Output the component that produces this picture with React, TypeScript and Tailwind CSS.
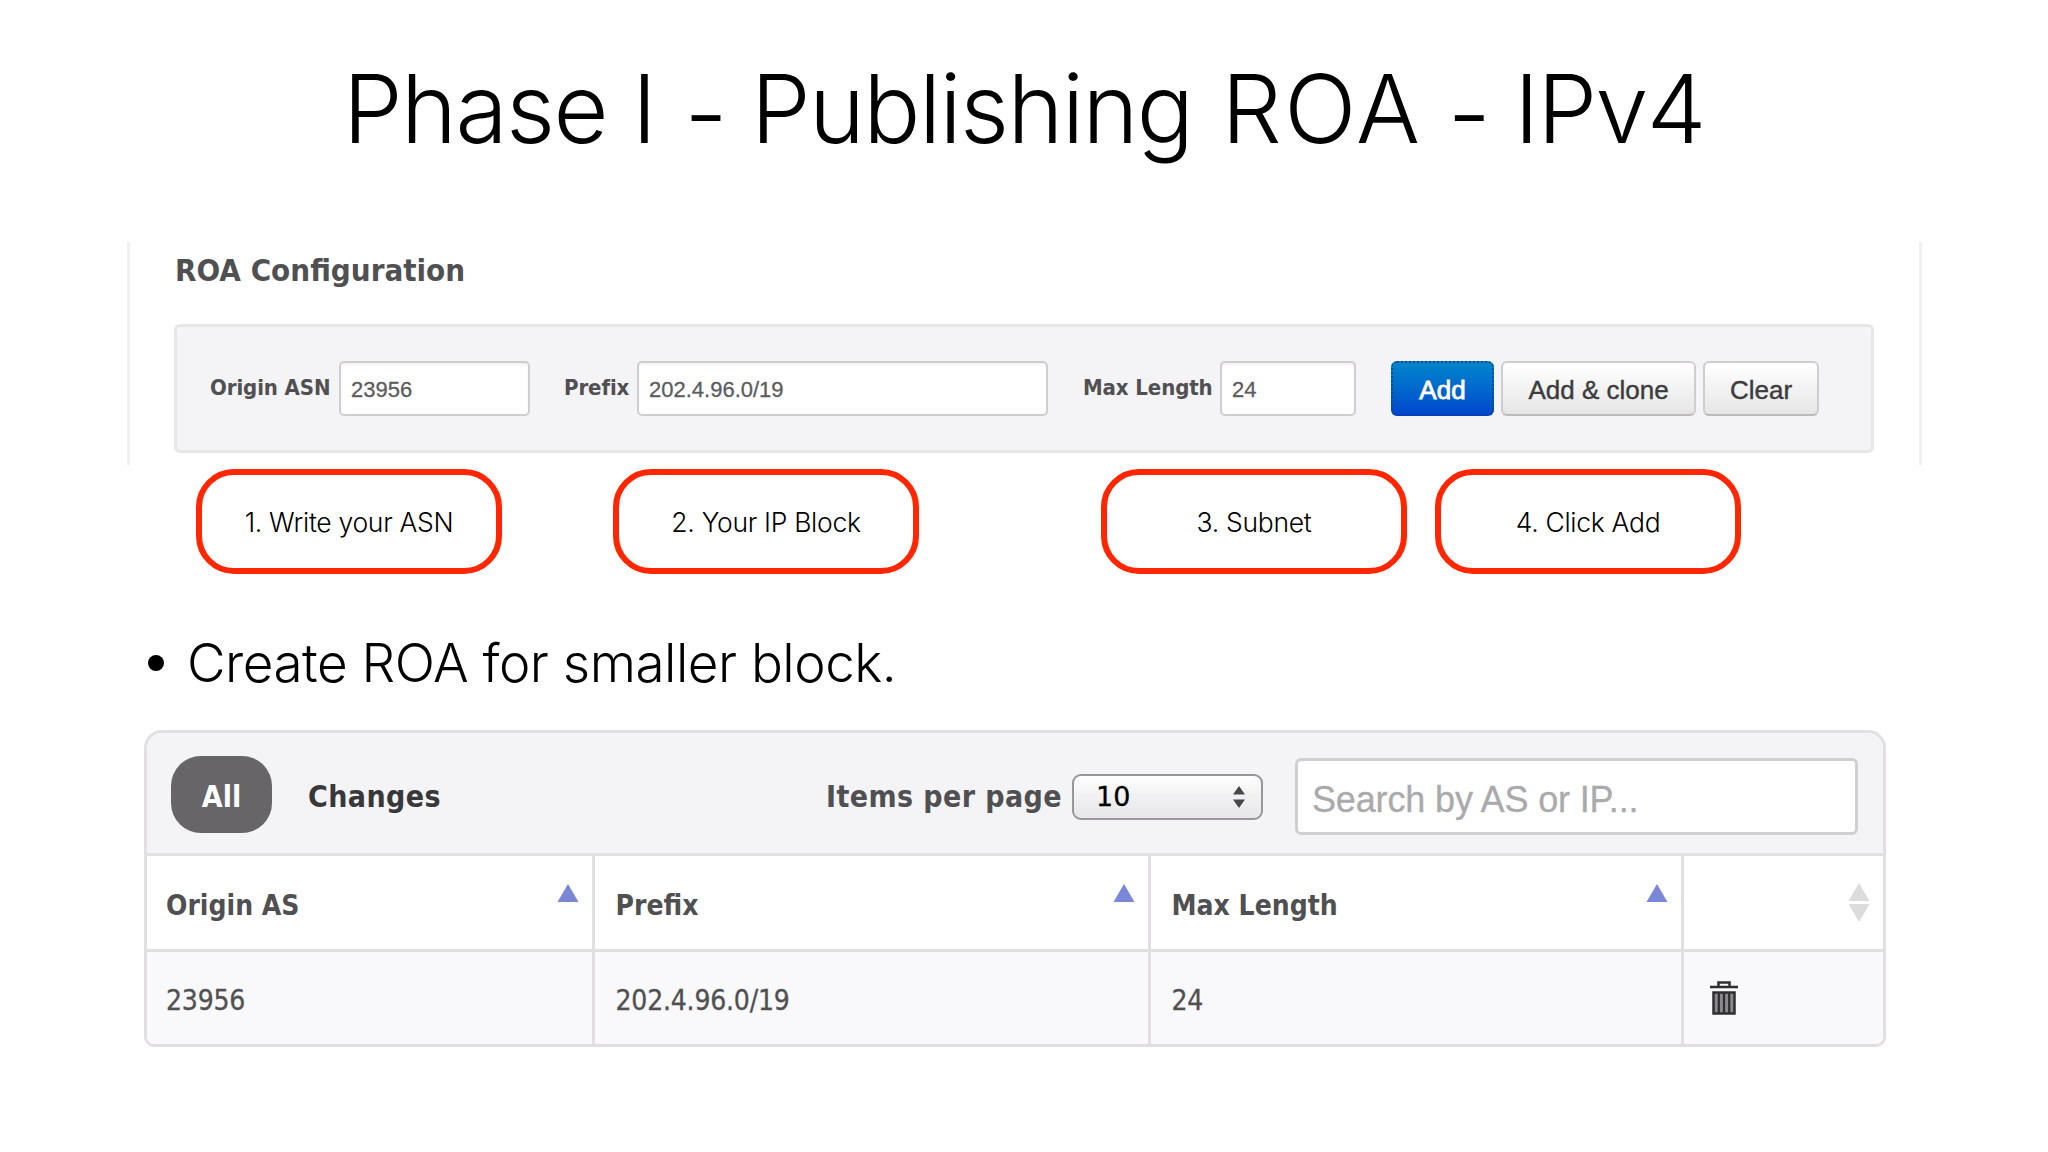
import clsx from "clsx";

export default function App() {
  return (
    <div className="h-[1152px] w-[2048px] overflow-hidden bg-white text-black">
      <h1 className="mt-[55px] h-[108px] text-center font-['Inter',sans-serif] text-[95px] leading-[108px] font-light tracking-[-1.6px]">
        Phase I <Dash className="ml-1" /> Publishing{" "}
        <span className="ml-1 tracking-[2.5px]">ROA</span> <Dash /> IPv4
      </h1>

      <RoaConfiguration />

      <div className="mt-1 flex pl-[196px]">
        <Callout>1. Write your ASN</Callout>
        <Callout className="ml-[111px]">2. Your IP Block</Callout>
        <Callout className="ml-[182px]">3. Subnet</Callout>
        <Callout className="ml-[28px]">4. Click Add</Callout>
      </div>

      <ul className="mt-[59px] pl-[148px]">
        <li className="flex h-[60px] items-center font-['Inter',sans-serif] text-[53px] leading-[60px] font-light tracking-[-0.5px]">
          <span className="mr-[23px] size-4 rounded-full bg-black" />
          Create ROA for smaller block.
        </li>
      </ul>

      <RoaTable />
    </div>
  );
}

function Dash({ className }: { className?: string }) {
  return <span className={clsx("relative top-[5px]", className)}>-</span>;
}

function RoaConfiguration() {
  return (
    <section className="mt-[79px] ml-[127px] h-[223px] w-[1795px] border-x-3 border-[#f1f1f1] pt-3 pl-[44px]">
      <h2 className="h-8 pl-px font-['DejaVu_Sans_Condensed','DejaVu_Sans',sans-serif] text-[31px] leading-8 font-bold text-[#505052]">
        ROA Configuration
      </h2>
      <form className="mt-[38px] flex h-[129px] w-[1700px] items-center rounded-md border-3 border-[#e8e6e8] bg-[#f4f3f6] pl-[33px]">
        <Field label="Origin ASN" value="23956" labelWidth="w-[129px]" inputWidth="w-[191px]" />
        <Field
          label="Prefix"
          value="202.4.96.0/19"
          labelWidth="w-[73px]"
          inputWidth="w-[411px]"
          className="ml-[34px]"
        />
        <Field
          label="Max Length"
          value="24"
          labelWidth="w-[137px]"
          inputWidth="w-[136px]"
          className="ml-[35px]"
        />
        <div className="ml-[35px] flex gap-[7px]">
          <Button primary className="w-[103px]">
            Add
          </Button>
          <Button className="w-[195px]">Add &amp; clone</Button>
          <Button className="w-[116px]">Clear</Button>
        </div>
      </form>
    </section>
  );
}

function Field({
  label,
  value,
  labelWidth,
  inputWidth,
  className,
}: {
  label: string;
  value: string;
  labelWidth: string;
  inputWidth: string;
  className?: string;
}) {
  return (
    <label className={clsx("flex items-center", className)}>
      <span
        className={clsx(
          "pb-px font-['DejaVu_Sans_Condensed','DejaVu_Sans',sans-serif] text-[22px] leading-none font-bold tracking-[-0.1px] whitespace-nowrap text-[#505052]",
          labelWidth,
        )}
      >
        {label}
      </span>
      <span
        className={clsx(
          "flex h-[55px] items-center rounded-[5px] border-2 border-[#cfcdd0] bg-white pt-[3px] pl-[10px] font-['Liberation_Sans',sans-serif] text-[22px] leading-none text-[#5c5c5e] shadow-[inset_0_2px_2px_rgba(0,0,0,0.05)] [-webkit-text-stroke:0.3px_#5c5c5e]",
          inputWidth,
        )}
      >
        {value}
      </span>
    </label>
  );
}

function Button({
  children,
  primary,
  className,
}: {
  children: React.ReactNode;
  primary?: boolean;
  className?: string;
}) {
  return (
    <button
      type="button"
      className={clsx(
        "flex h-[55px] items-center justify-center rounded-[6px] pt-[3px] font-['Liberation_Sans',sans-serif] text-[26px] leading-none",
        primary
          ? "border-2 border-dotted border-[#0b4a86] border-b-[#0a3fa8] bg-linear-to-b from-[#0a86cc] to-[#0444cc] bg-origin-border text-white [-webkit-text-stroke:0.8px_white] [text-shadow:0_-1px_0_rgba(0,0,0,0.25)]"
          : "border-2 border-[#cfcdd0] border-b-[#bcbabd] bg-linear-to-b from-white to-[#e6e6e6] text-[#3c3c3e] [-webkit-text-stroke:0.4px_#3c3c3e]",
        className,
      )}
    >
      {children}
    </button>
  );
}

function Callout({
  children,
  className,
}: {
  children: React.ReactNode;
  className?: string;
}) {
  return (
    <div
      className={clsx(
        "flex h-[105px] w-[306px] items-center justify-center rounded-[38px] border-6 border-[#ff2600] pt-[2px] font-['Inter',sans-serif] text-[26.5px] leading-none font-light tracking-[-0.3px]",
        className,
      )}
    >
      {children}
    </div>
  );
}

function RoaTable() {
  return (
    <section className="mt-[37px] ml-[144px] w-[1742px] overflow-hidden rounded-t-[18px] rounded-b-[10px] border-3 border-[#e1dfe2] font-['DejaVu_Sans_Condensed','DejaVu_Sans',sans-serif] text-[28px] leading-none text-[#505052]">
      <div className="flex h-[123px] items-center border-b-3 border-[#e1dfe2] bg-[#f4f3f6] pt-[7px] text-[30px] font-bold">
        <span className="mb-[5px] ml-6 flex h-[77px] w-[101px] items-center justify-center rounded-[30px] bg-[#686568] pt-[5px] text-white">
          All
        </span>
        <span className="ml-[36px] w-[136px] tracking-[0.4px] text-[#38383a]">Changes</span>
        <span className="ml-[382px] w-[246px] tracking-[0.4px] whitespace-nowrap">
          Items per page
        </span>
        <span className="flex h-[46px] w-[191px] items-center justify-between rounded-[9px] border-2 border-[#98969a] bg-linear-to-b from-white via-[#f0f0f2] to-[#e8e8ea] pr-[15px] pl-[22px] font-['DejaVu_Sans',sans-serif] text-[27px] font-normal text-black [-webkit-text-stroke:0.3px_black]">
          10
          <svg width="14" height="22" viewBox="0 0 14 22" fill="#48484a">
            <path d="M7 0l6 8.5H1zM7 22l6-8.500H1z" />
          </svg>
        </span>
        <span className="ml-[32px] flex h-[77px] w-[563px] items-center rounded-[6px] border-3 border-[#d0ced1] bg-white pt-[6px] pl-[14px] font-['Liberation_Sans',sans-serif] text-[36px] font-normal tracking-[-0.15px] text-[#aaaaac] [-webkit-text-stroke:0.3px_#aaaaac]">
          Search by AS or IP...
        </span>
      </div>

      <table className="w-full table-fixed border-collapse text-left">
        <colgroup>
          <col className="w-[446px]" />
          <col className="w-[556px]" />
          <col className="w-[533px]" />
          <col className="w-[201px]" />
        </colgroup>
        <thead>
          <tr className="h-[94px]">
            <HeaderCell>Origin AS</HeaderCell>
            <HeaderCell>Prefix</HeaderCell>
            <HeaderCell>Max Length</HeaderCell>
            <th className="p-0 pr-[13px]">
              <svg className="mt-px ml-auto" width="22" height="39" viewBox="0 0 22 39" fill="#dddbde">
                <path d="M11 0l10.500 18H.5zM11 39l10.500-18H.5z" />
              </svg>
            </th>
          </tr>
        </thead>
        <tbody>
          <tr className="h-[94px] border-t-3 border-[#e1dfe2] bg-[#f9f8fb]">
            <BodyCell>23956</BodyCell>
            <BodyCell>202.4.96.0/19</BodyCell>
            <BodyCell>24</BodyCell>
            <td className="pl-[26px]">
              <TrashIcon />
            </td>
          </tr>
        </tbody>
      </table>
    </section>
  );
}

function HeaderCell({ children }: { children: React.ReactNode }) {
  return (
    <th className="border-r-3 border-[#e1dfe2] py-0 pr-[13px] pl-[21px] font-bold first:pl-[19px]">
      <div className="flex items-center justify-between pt-[7px]">
        {children}
        <svg className="mb-[25px]" width="22" height="18" viewBox="0 0 22 18" fill="#7a86d8">
          <path d="M11 0l10.500 18H.5z" />
        </svg>
      </div>
    </th>
  );
}

function BodyCell({ children }: { children: React.ReactNode }) {
  return (
    <td className="border-r-3 border-[#e1dfe2] pt-[6px] pb-0 pl-[21px] tracking-[-0.2px] [-webkit-text-stroke:0.3px_#505052] first:pl-[19px]">
      {children}
    </td>
  );
}

function TrashIcon() {
  return (
    <svg width="28" height="34" viewBox="0 0 28 34">
      <path d="M0 6h28M8.500 6V1.500h11V6" fill="none" stroke="#2e2e30" strokeWidth="2.500" />
      <path d="M3.500 11.500h21v21h-21z" fill="#8a888c" stroke="#2e2e30" strokeWidth="2.500" />
      <path d="M8.800 11v22M14 11v22M19.200 11v22" stroke="#2e2e30" strokeWidth="2.200" />
    </svg>
  );
}
